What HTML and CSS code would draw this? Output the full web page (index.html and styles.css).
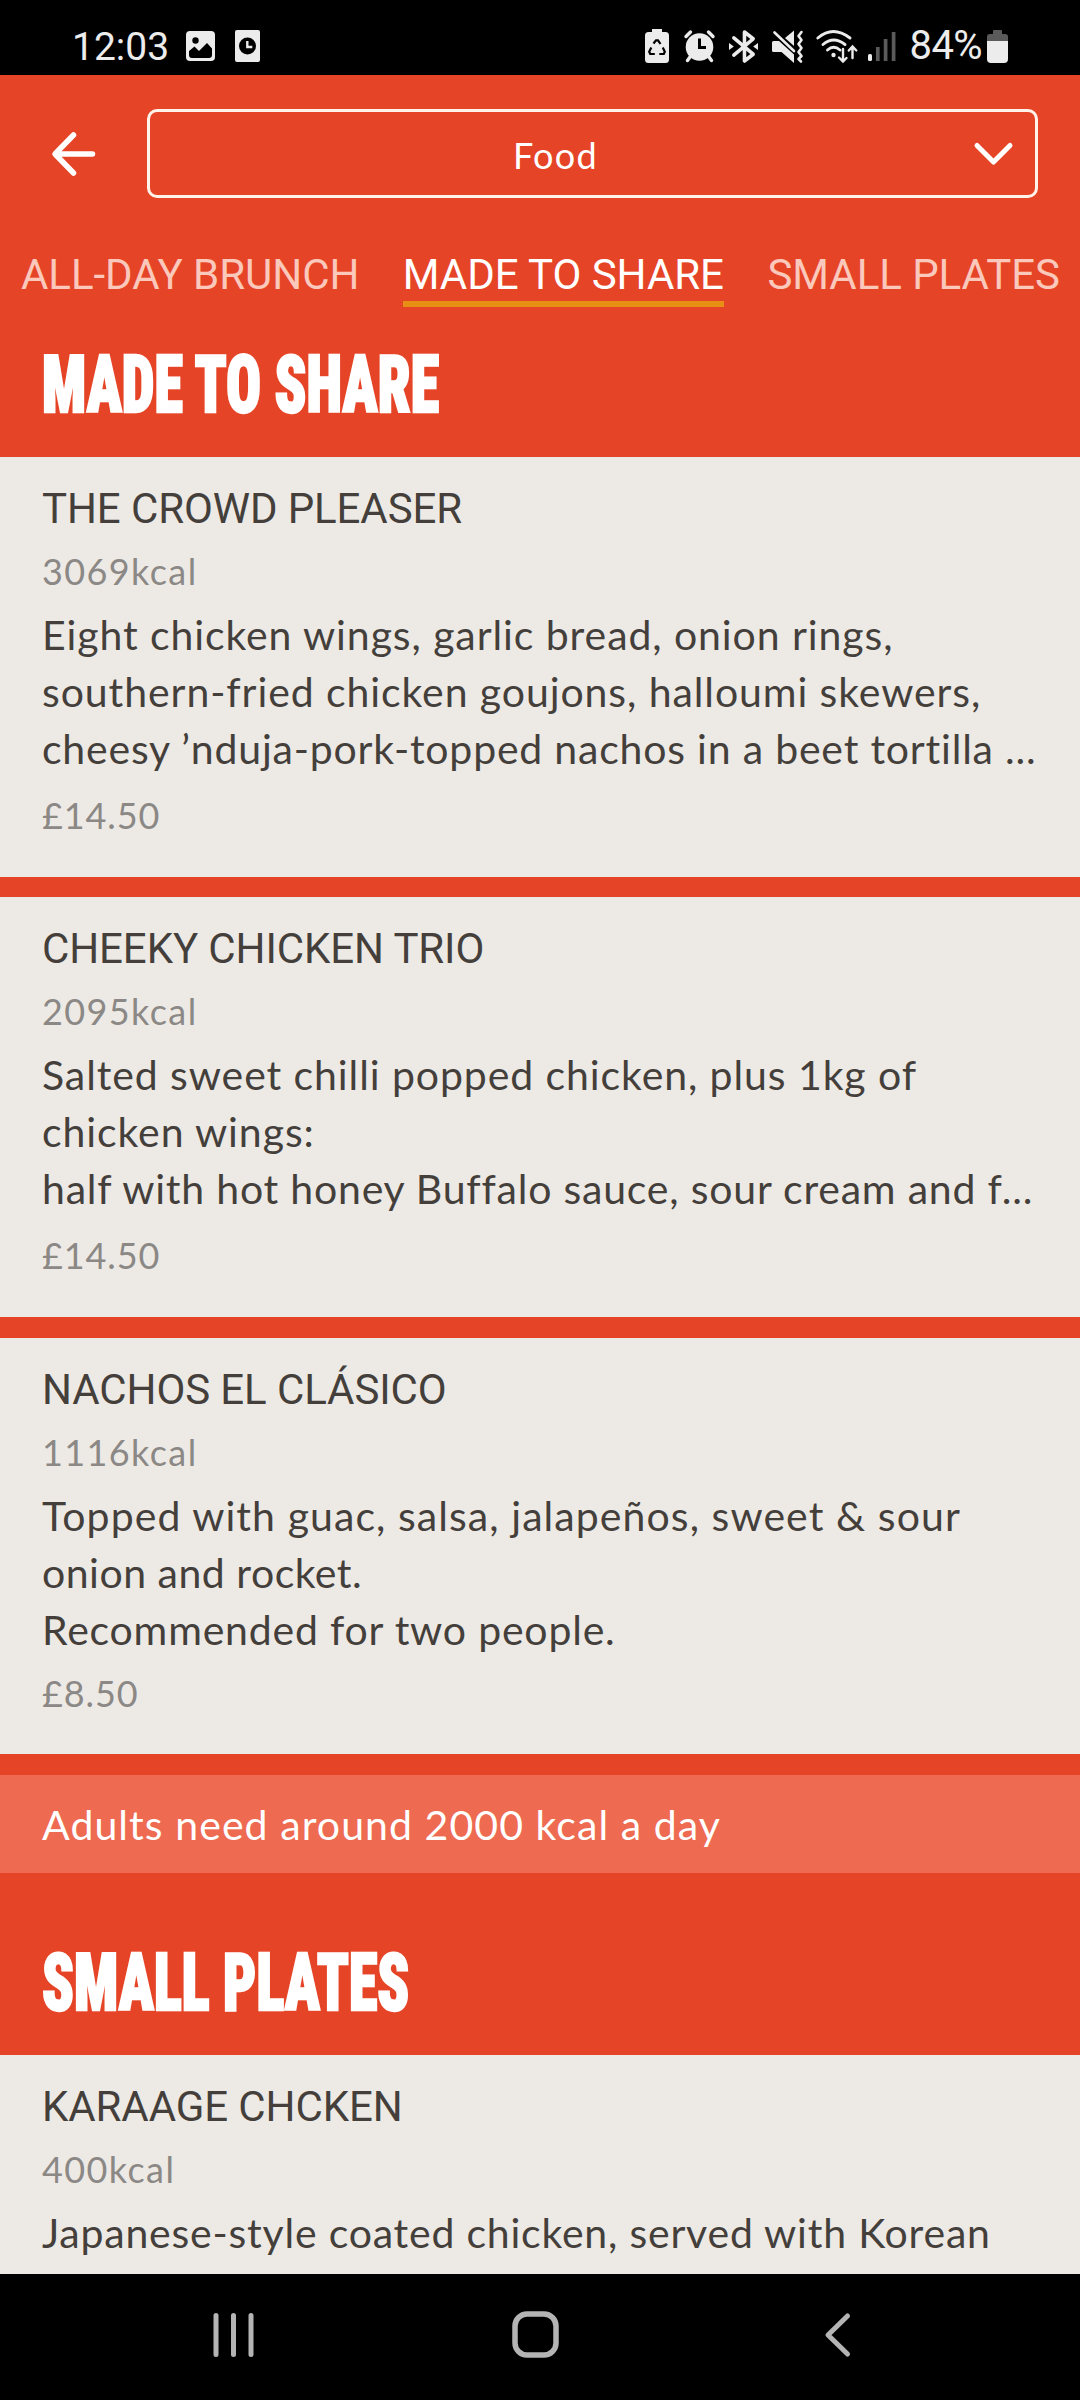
FILE: index.html
```html
<!DOCTYPE html>
<html lang="en">
<head>
<meta charset="utf-8">
<title>Menu – Food</title>
<link rel="stylesheet" href="styles.css">
</head>
<body>
<div class="status">
  <div class="status-left">
    <span class="clock">12:03</span>
    <svg class="icon-picture" width="29" height="30" viewBox="0 0 29 30"><rect width="29" height="30" rx="4" fill="#ececec"/><circle cx="9.5" cy="9.5" r="3.2" fill="#000"/><path d="M3 20 8.5 15.5 13 20 21 12 26 17.500V24Q26 27 23 27H6Q3 27 3 24Z" fill="#000"/></svg>
    <svg class="icon-app" width="25" height="32" viewBox="0 0 25 32"><rect width="25" height="32" rx="2" fill="#ececec"/><circle cx="12.500" cy="16" r="8.500" fill="#000"/><path d="M12.300 11v6h5" fill="none" stroke="#ececec" stroke-width="2.400"/></svg>
  </div>
  <div class="status-right">
    <svg width="24" height="34" viewBox="0 0 24 34"><path d="M7 0h10v3h3.500Q24 3 24 6.500V30.500Q24 34 20.500 34h-17Q0 34 0 30.500V6.500Q0 3 3.500 3H7Z" fill="#ececec"/><path d="M8.500 14.500 11 11.300h2l2.500 3.700M17.800 18.500l2 4.200-1 2.300h-4.500M9.800 25H5.200l-1-2.300 2.100-4.200" fill="none" stroke="#000" stroke-width="2.200"/></svg>
    <svg class="icon-alarm" width="31" height="32" viewBox="0 0 31 32"><circle cx="15.500" cy="17" r="13.800" fill="#ececec"/><path d="M2 6.500 6.500 2M29 6.500 24.500 2M6 27l-2.500 3.500M25 27l2.500 3.500" stroke="#ececec" stroke-width="3.400" stroke-linecap="round"/><path d="M15.500 8.500V17.500H22" fill="none" stroke="#000" stroke-width="3"/></svg>
    <svg class="icon-bluetooth" width="29" height="35" viewBox="0 0 30 35"><path d="M5 8.500 25 25.500 16 32.500V2.500L25 9.500 5 26.500" fill="none" stroke="#ececec" stroke-width="3.700" stroke-linejoin="round" stroke-linecap="round"/><path d="M0 14 5 17.500 0 21ZM30 14 25 17.500 30 21Z" fill="#ececec"/></svg>
    <svg class="icon-mute" width="32" height="33" viewBox="0 0 32 33"><path d="M0 12.500Q0 11 1.500 11H7L22 24.500V33L9.500 22H1.500Q0 22 0 20.500ZM13 8 22 0.500V16Z" fill="#ececec"/><path d="M2.500 2.500 22 21" stroke="#ececec" stroke-width="2.600" stroke-linecap="round"/><path d="M29.500 2 26.500 6 29.500 10 26.500 14 29.500 18 26.500 22 29.500 26 26.500 29 29 31.500" fill="none" stroke="#ececec" stroke-width="2.600" stroke-linecap="round" stroke-linejoin="round"/></svg>
    <svg class="icon-wifi" width="42" height="33" viewBox="0 0 42 33"><g fill="none" stroke="#ececec" stroke-width="2.900" stroke-linecap="round"><path d="M1.800 8Q17-5 34 8M7 14.500Q17.500 5.500 29 14.500M11.500 20Q17.500 14.500 24 20"/><path stroke-width="2.400" d="M27 19V31M23 27.500 27 31.500 30.500 28M36.500 28V17M32.800 20.500 36.500 16.500 40.300 20.500"/></g><circle cx="17.500" cy="25" r="2.200" fill="#ececec"/></svg>
    <svg class="icon-signal" width="28" height="30" viewBox="0 0 28 30"><rect y="23" width="4" height="7" rx="1.500" fill="#ececec"/><path d="M9.800 16V30M17.600 8V30M25.600 1V30" stroke="#5a5a5a" stroke-width="3.700"/></svg>
    <span class="battery-text">84%</span>
    <svg class="icon-battery" width="21" height="33" viewBox="0 0 21 33"><path d="M0 11V6.500Q0 4 3 4H6V1Q6 0 7 0H14Q15 0 15 1V4H18Q21 4 21 6.500V11Z" fill="#5a5a5a"/><path d="M0 11H21V29Q21 33 17 33H4Q0 33 0 29Z" fill="#ececec"/></svg>
  </div>
</div>

<main class="app">
  <header class="topbar">
    <svg class="back" width="43" height="44" viewBox="0 0 43 44"><path d="M21.500 3 3 22 21.500 41M3.500 22H40.500" fill="none" stroke="#fff" stroke-width="5.500" stroke-linecap="round" stroke-linejoin="round"/></svg>
    <div class="select">
      <span class="select-label">Food</span>
      <svg width="39" height="24" viewBox="0 0 39 24"><path d="M3 3.500 19.500 20 36 3.500" fill="none" stroke="#fff" stroke-width="5" stroke-linecap="round" stroke-linejoin="round"/></svg>
    </div>
  </header>
  <nav class="tabs">
    <span class="tab">ALL-DAY BRUNCH</span>
    <span class="tab tab-active">MADE TO SHARE</span>
    <span class="tab">SMALL PLATES</span>
  </nav>

  <h2 class="heading"><span class="heading-text">MADE TO SHARE</span></h2>
  <article class="card">
    <h3 class="title">THE CROWD PLEASER</h3>
    <div class="kcal">3069kcal</div>
    <p class="desc"><span class="line">Eight chicken wings, garlic bread, onion rings,</span><span class="line">southern-fried chicken goujons, halloumi skewers,</span><span class="line snug">cheesy ’nduja-pork-topped nachos in a beet tortilla ...</span></p>
    <div class="price">£14.50</div>
  </article>
  <article class="card">
    <h3 class="title">CHEEKY CHICKEN TRIO</h3>
    <div class="kcal">2095kcal</div>
    <p class="desc"><span class="line">Salted sweet chilli popped chicken, plus 1kg of</span><span class="line">chicken wings:</span><span class="line snug">half with hot honey Buffalo sauce, sour cream and f...</span></p>
    <div class="price">£14.50</div>
  </article>
  <article class="card card-last">
    <h3 class="title">NACHOS EL CLÁSICO</h3>
    <div class="kcal">1116kcal</div>
    <p class="desc"><span class="line loose">Topped with guac, salsa, jalapeños, sweet &amp; sour</span><span class="line tight">onion and rocket.</span><span class="line snug">Recommended for two people.</span></p>
    <div class="price">£8.50</div>
  </article>
  <p class="note loose">Adults need around 2000 kcal a day</p>

  <h2 class="heading heading-next"><span class="heading-text">SMALL PLATES</span></h2>
  <article class="card">
    <h3 class="title">KARAAGE CHCKEN</h3>
    <div class="kcal">400kcal</div>
    <p class="desc"><span class="line snug">Japanese-style coated chicken, served with Korean</span></p>
  </article>
</main>

<footer class="navbar">
  <svg class="nav-recents" width="42" height="44" viewBox="0 0 42 44"><path d="M3 2.500V41.500M20.500 2.500V41.500M38 2.500V41.500" stroke="#b4b4b4" stroke-width="5" stroke-linecap="round"/></svg>
  <svg class="nav-home" width="47" height="47" viewBox="0 0 47 47"><rect x="3" y="3" width="41" height="41" rx="12" fill="none" stroke="#b4b4b4" stroke-width="5.500"/></svg>
  <svg class="nav-back" width="27" height="44" viewBox="0 0 27 44"><path d="M23.500 3 4 22 23.500 41" fill="none" stroke="#b4b4b4" stroke-width="5" stroke-linecap="round" stroke-linejoin="round"/></svg>
</footer>
</body>
</html>
```
FILE: styles.css
```css
* { box-sizing: border-box; margin: 0; padding: 0; }
body {
  display: flex;
  flex-direction: column;
  width: 1080px;
  height: 2400px;
  overflow: hidden;
  background: #000;
  font-family: Lato, "Open Sans", sans-serif;
}
svg { display: block; flex: none; overflow: visible; }

/* system status bar */
.status {
  display: flex;
  justify-content: space-between;
  height: 75px;
  flex: none;
  padding: 18px 72px 0;
  color: #ececec;
  font-family: Roboto, sans-serif;
}
.status-left, .status-right { display: flex; align-items: center; height: 57px; padding-bottom: 1px; }
.clock { font-size: 39px; line-height: 58px; width: 114px; padding-top: 1px; }
.icon-app { margin-left: 20px; }
.icon-alarm { margin-left: 15px; }
.icon-bluetooth { margin-left: 14px; }
.icon-mute { margin-left: 14px; }
.icon-wifi { margin-left: 12px; }
.icon-signal { margin-left: 10px; }
.battery-text { font-size: 40px; line-height: 54px; margin: 0 5px 0 14px; letter-spacing: -0.6px; }

/* app area */
.app { flex: 1; min-height: 0; overflow: hidden; background: #e64427; }
.topbar { display: flex; align-items: center; padding: 34px 42px 0 52px; }
.select {
  display: flex;
  align-items: center;
  flex: 1;
  height: 89px;
  margin-left: 52px;
  padding: 0 22px 0 0;
  border: 3px solid #fff3ea;
  border-radius: 10px;
  color: #fff;
}
.select-label { flex: 1; padding: 3px 13px 0 0; text-align: center; font-size: 36px; line-height: 45px; letter-spacing: 1.3px; }

.tabs { display: flex; justify-content: space-between; margin-top: 52px; padding: 0 20px 0 21px; }
.tab {
  height: 57px;
  border-bottom: 6px solid transparent;
  color: #fbc8bc;
  font: 42px/49px Roboto, sans-serif;
  letter-spacing: -0.05px;
  white-space: nowrap;
}
.tab-active { color: #fff; border-color: #e88e14; }

.heading { display: flex; align-items: flex-end; height: 150px; padding: 0 0 32px 42px; }
.heading-next { height: 182px; }
.heading-text {
  color: #fff;
  font: 900 80px/80px Roboto, sans-serif;
  font-stretch: 75%;
  white-space: nowrap;
  -webkit-text-stroke: 2.5px #fff;
  transform: scaleX(0.727);
  transform-origin: 0 50%;
}

.card { height: 420px; padding: 27px 42px 0; background: #edeae6; color: #443f3b; }
.card + .card { margin-top: 20px; }
.card + .card-last { height: 416px; margin-top: 21px; }
.title { font: 400 42px/49px Roboto, sans-serif; letter-spacing: -0.1px; white-space: nowrap; }
.kcal, .price { color: #8b8885; font-size: 36px; line-height: 45px; }
.kcal { margin-top: 16px; letter-spacing: 1.4px; }
.desc { margin-top: 12px; font-size: 41px; line-height: 57px; letter-spacing: 0.91px; }
.line { display: block; white-space: nowrap; }
.snug { letter-spacing: 0.79px; }
.loose { letter-spacing: 1.07px; }
.tight { letter-spacing: 0.5px; }
.price { margin-top: 16px; letter-spacing: 0.9px; }
.card-last .price { margin-top: 13px; }

.note {
  height: 98px;
  margin-top: 21px;
  padding: 21px 42px 0;
  background: #ee6a51;
  color: #fff;
  font-size: 41px;
  line-height: 57px;
}

/* system navigation bar */
.navbar { display: flex; align-items: center; height: 126px; flex: none; padding: 0 0 5px 213px; }
.nav-home { margin-left: 257px; }
.nav-back { margin-left: 265px; }
```
